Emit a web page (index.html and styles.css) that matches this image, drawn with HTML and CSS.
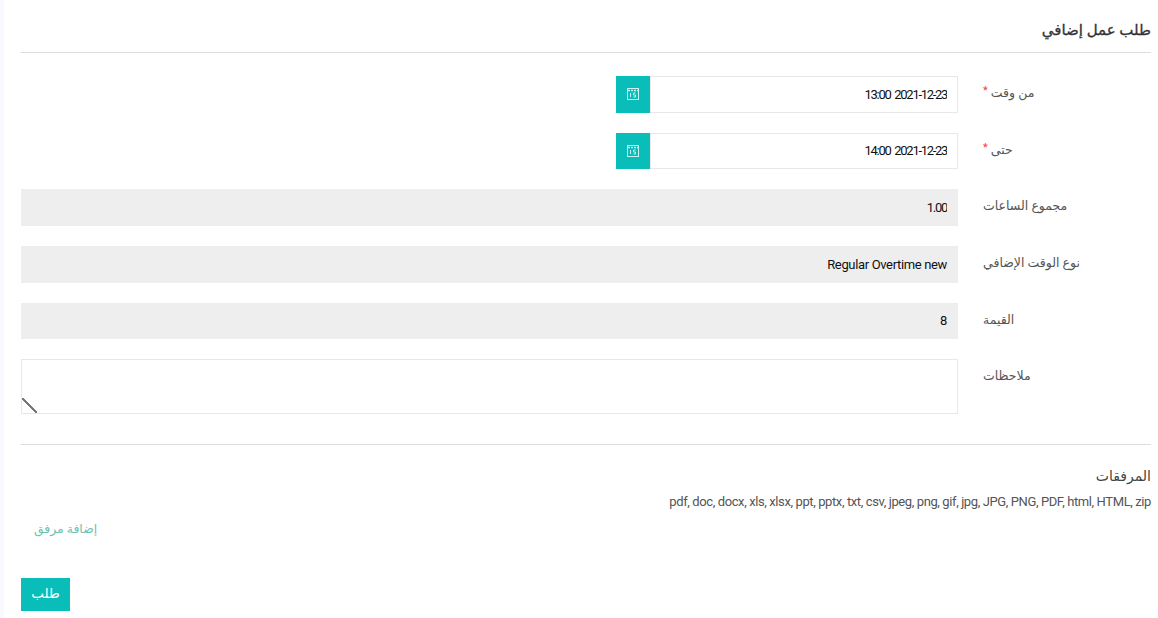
FILE: index.html
```html
<!DOCTYPE html>
<html lang="ar" dir="rtl">
<head>
<meta charset="utf-8">
<title>طلب عمل إضافي</title>
<link rel="stylesheet" href="styles.css">
</head>
<body>
<main class="page">
  <h1 class="title">طلب عمل إضافي</h1>
  <form class="form">
    <div class="row">
      <label class="label">من وقت <span class="req">*</span></label>
      <div class="field date">
        <input class="input num" type="text" value="2021-12-23 13:00">
        <button type="button" class="cal">
          <svg width="12" height="12" viewBox="0 0 12 12" fill="none" stroke="#c9f1ef" stroke-width="1"><rect x=".5" y=".5" width="11" height="11"/><path d="M1 2.5h10" stroke-width="1.4" stroke-dasharray="2 1"/><path d="M3.5 5v4M8.5 5h-2v2h2v2h-2"/></svg>
        </button>
      </div>
    </div>
    <div class="row">
      <label class="label">حتى <span class="req">*</span></label>
      <div class="field date">
        <input class="input num" type="text" value="2021-12-23 14:00">
        <button type="button" class="cal">
          <svg width="12" height="12" viewBox="0 0 12 12" fill="none" stroke="#c9f1ef" stroke-width="1"><rect x=".5" y=".5" width="11" height="11"/><path d="M1 2.5h10" stroke-width="1.4" stroke-dasharray="2 1"/><path d="M3.5 5v4M8.5 5h-2v2h2v2h-2"/></svg>
        </button>
      </div>
    </div>
    <div class="row">
      <label class="label">مجموع الساعات</label>
      <div class="field"><input class="input ro num" type="text" value="1.00" readonly></div>
    </div>
    <div class="row">
      <label class="label">نوع الوقت الإضافي</label>
      <div class="field"><input class="input ro" type="text" value="Regular Overtime new" readonly></div>
    </div>
    <div class="row">
      <label class="label">القيمة</label>
      <div class="field"><input class="input ro" type="text" value="8" readonly></div>
    </div>
    <div class="row">
      <label class="label">ملاحظات</label>
      <div class="field"><textarea class="input area"></textarea></div>
    </div>
  </form>
  <section class="attach">
    <h2 class="attach-title">المرفقات</h2>
    <p class="types">pdf, doc, docx, xls, xlsx, ppt, pptx, txt, csv, jpeg, png, gif, jpg, JPG, PNG, PDF, html, HTML, zip</p>
    <div class="add-row"><a class="add" href="#">إضافة مرفق</a></div>
  </section>
  <div class="actions"><button type="button" class="submit">طلب</button></div>
</main>
</body>
</html>
```
FILE: styles.css
```css
* { box-sizing: border-box; }
html, body { height: 100%; }
body {
  margin: 0;
  background: #fff;
  font-family: Roboto, "DejaVu Sans", sans-serif;
  font-size: 13px;
  color: #333;
  overflow: hidden;
  border-left: 4px solid #f8f9ff;
}
.page { padding: 0 7px 0 17px; }
.title {
  margin: 0;
  height: 53px;
  padding-top: 20px;
  font-size: 15px;
  line-height: 20px;
  font-weight: 400;
  -webkit-text-stroke: .3px #333;
  color: #333;
  border-bottom: 1px solid #ddd;
}
.form {
  display: flex;
  flex-direction: column;
  gap: 20px;
  padding-top: 23px;
  padding-bottom: 30px;
  border-bottom: 1px solid #ddd;
}
.row { display: flex; }
.label {
  flex: 0 0 193px;
  padding: 9px 0 0 25px;
  text-align: left;
  line-height: 16px;
  font-size: 12.5px;
  color: #555;
  white-space: nowrap;
}
.req { color: #f33; font-size: 11px; line-height: 0; vertical-align: 3px; }
.field { flex: 1; display: flex; }
.date { padding-left: 595px; }
.input {
  flex: 1;
  min-width: 0;
  height: 36.67px;
  padding: 0 10px;
  border: 1px solid #e8e8e8;
  background: #fff;
  font-family: Roboto, sans-serif;
  font-size: 13px;
  letter-spacing: -.35px;
  color: #111;
  outline: 0;
}
.num { letter-spacing: -1.3px; word-spacing: 2px; }
.ro { background: #eee; border-color: #eee; }
.area { height: 55px; display: block; }
.area::-webkit-resizer {
  background: linear-gradient(45deg, transparent 45%, #777 45%, #777 55%, transparent 55%);
}
.cal {
  flex: 0 0 34px;
  height: 36.67px;
  padding: 0;
  border: 0;
  background: #09bdb9;
  display: flex;
  align-items: center;
  justify-content: center;
}
.attach { padding-top: 21px; }
.attach-title {
  margin: 0;
  font-size: 14px;
  line-height: 20px;
  font-weight: 400;
  color: #444;
}
.types {
  margin: 8px 0 0;
  font-size: 13px;
  line-height: 16px;
  letter-spacing: -.39px;
  color: #555;
}
.add-row { padding: 11px 0 0; text-align: left; }
.add {
  display: inline-block;
  margin-left: 13px;
  font-size: 12.4px;
  line-height: 16px;
  color: #6dbfae;
  text-decoration: none;
}
.actions { padding-top: 41px; display: flex; justify-content: flex-end; }
.submit {
  width: 49px;
  height: 33px;
  border: 0;
  padding: 0 0 3px;
  background: #09bdb9;
  color: #fff;
  font-family: Roboto, "DejaVu Sans", sans-serif;
  font-size: 13.5px;
}
```
